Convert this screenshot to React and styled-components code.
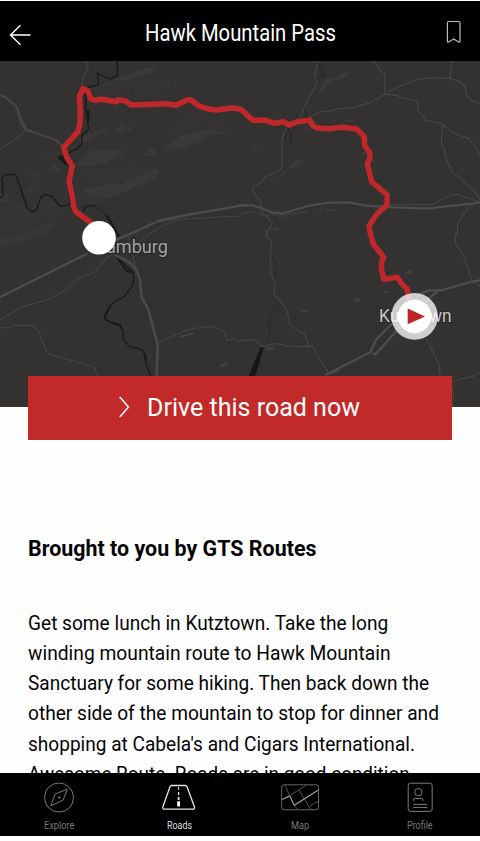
import React, { useLayoutEffect, useRef, useState } from "react";
import styled, { createGlobalStyle } from "styled-components";

const GlobalStyle = createGlobalStyle`
  * { box-sizing: border-box; }
  html, body { margin: 0; background: #fefefe; }
  body { font-family: Roboto, "Liberation Sans", sans-serif; overflow: hidden; }
`;

const Screen = styled.div`
  display: flex;
  flex-direction: column;
  width: 480px;
  height: 841px;
  padding: 1px 0 5px;
  overflow: hidden;
  background: #fefefe;
`;

const Header = styled.header`
  display: grid;
  grid-template-columns: 40px 1fr 40px;
  flex: 0 0 60px;
  align-items: center;
  color: #fff;
  background: #000;
  svg { display: block; }
`;

const IconButton = styled.button`
  display: flex;
  justify-content: ${(p) => (p.$end ? "flex-start" : "flex-end")};
  padding: ${(p) => (p.$end ? "2px 0 0 6px" : "7px 9px 0 0")};
  border: 0;
  color: inherit;
  background: none;
`;

const Title = styled.h1`
  display: flex;
  justify-content: center;
  margin: 6px 0 0;
  font-size: 23px;
  font-weight: 400;
  line-height: 28px;
`;

const FitBox = styled.span`
  display: block;
  flex: none;
  width: ${(p) => p.$width}px;
  white-space: nowrap;
`;

const FitInner = styled.span`
  display: inline-block;
  transform-origin: 0 50%;
`;

/* Condenses a line of text horizontally to the given width. */
function Fit({ width, children }) {
  const ref = useRef(null);
  const [scale, setScale] = useState(1);
  useLayoutEffect(() => {
    setScale(width / ref.current.offsetWidth);
  }, [width, children]);
  return (
    <FitBox $width={width}>
      <FitInner ref={ref} style={{ transform: `scaleX(${scale})` }}>{children}</FitInner>
    </FitBox>
  );
}

const MapView = styled.section`
  flex: 0 0 346px;
  background: #343231;
  svg { display: block; }
`;

const MapLabel = styled.text`
  font-size: 18.5px;
  fill: ${(p) => (p.$bright ? "#c9c9c9" : "#a3a3a3")};
  stroke: #252525;
  stroke-width: 2px;
  paint-order: stroke;
`;

const DriveButton = styled.button`
  display: flex;
  flex: 0 0 64px;
  align-items: center;
  gap: 15.5px;
  width: 424px;
  margin: -31.5px 28px 0;
  padding: 0 0 2px 90px;
  border: 0;
  color: #fff;
  background: #c22929;
  font: 400 26.5px/32px Roboto, "Liberation Sans", sans-serif;
`;

const Content = styled.main`
  flex: 1 1 0;
  min-height: 0;
  padding: 94.5px 28px 0;
  overflow: hidden;
  color: #050505;
`;

const Heading = styled.h2`
  margin: 0;
  font-size: 21.5px;
  font-weight: 700;
  line-height: 30px;
`;

const Description = styled.div`
  padding-top: 44px;
  font-size: 20px;
  line-height: 30.15px;
`;

const TabBar = styled.nav`
  display: grid;
  grid-template-columns: 118px 122px 120px 120px;
  flex: 0 0 63px;
  background: #000;
`;

const Tab = styled.a`
  display: flex;
  flex-direction: column;
  align-items: center;
  padding-top: 8px;
  color: ${(p) => (p.$active ? "#dedede" : "#777")};
  font-size: 10px;
  line-height: 12px;
  svg { display: block; margin-bottom: 7px; overflow: visible; }
`;

const lines = [
  ["Get some lunch in Kutztown. Take the long", 360],
  ["winding mountain route to Hawk Mountain", 362.5],
  ["Sanctuary for some hiking. Then back down the", 401],
  ["other side of the mountain to stop for dinner and", 411],
  ["shopping at Cabela's and Cigars International.", 387],
  ["Awesome Route. Roads are in good condition", 382],
];

const route =
  "M95 226 91.7 223.3 76 211.7 73.7 206.7 71.7 193.3 69 181.7 72.3 166 66.7 157.3 63.7 147.3 78 131.7 80 123.3 80.3 110 79.3 96.7 82.7 88.5 87.7 90.7 90.7 98.7 95 100.3 101.7 99.3 116.7 101.7 117.7 99.6 126 101.3 131 105 166.7 103.7 176 105.3 187.7 99.7 190.7 99.7 199 106 206.7 108.7 216.7 110 231.7 108 240 109 243 111 252.7 120.3 266 120.3 274.3 123.3 283.3 121.7 289.3 125 297.3 121.7 310 120.3 312.3 125 316 127.7 329.3 128.7 341.7 127.3 356.7 129 364.3 136.7 364.7 145.7 369.7 152.3 370 157.7 367.3 164.3 371.7 181.7 387.3 195 387 205 376.7 214.3 369 226 370.3 233 373.3 244 383.7 257.3 381.3 263.3 381.7 270.7 384 279.3 397.3 277.3 402.7 285 407.3 289 408.8 300";

function RouteMap() {
  return (
    <svg width="480" height="346" viewBox="0 61 480 346">
      <g transform="translate(0 60) scale(.33333)" fill="#3a3937">
        <path d="M270 85 330 63 347 92 296 97zM336 60 430 25 472 22 455 40 390 59 367 73zM345 207 365 195 376 205 362 218zM375 205 390 197 403 207 388 217zM240 234 315 205 320 212 284 231 280 240 240 245zM228 315 262 279 280 270 367 269 365 284 321 306 258 321zM420 289 455 267 474 270 471 286zM492 264 544 225 620 209 687 215 665 223 620 226 618 238 578 253 550 269 525 263 512 269zM146 332 164 311 181 332zM82 350 103 335 124 339 107 352zM228 412 260 388 312 373 366 371 415 339 465 325 488 333 450 365 398 384 347 408 292 418zM74 397 90 384 110 392zM25 478 50 445 70 448 65 487zM125 455 148 442 180 451 168 460zM0 405 25 398 20 430 0 430z" />
        <path d="M80 515 145 487 178 492 140 520 60 550 0 560 0 530z" opacity=".7" />
        <g fill="#363432">
          <path d="M290 82 390 57 400 67 328 108 287 112zM405 59 512 60 515 80 440 107 400 103zM540 150 600 157 618 178 592 186zM600 194 651 180 675 200 618 209zM100 291 207 251 206 278 160 302zM220 337 300 330 392 315 460 330 385 362 296 373zM180 400 240 390 321 423 243 434zM0 440 145 420 215 435 55 505 0 515zM495 215 592 170 590 196 531 215z" />
        </g>
      </g>
      <g transform="translate(240 60) scale(.33333)" fill="#3b3a38">
        <path d="M235 102 254 58 287 52 307 38 327 36 325 49 299 60 279 58zM313 180 323 177 348 184 322 186zM187 210 200 198 208 206zM30 270 43 262 63 269zM145 329 148 317 170 297 189 302 182 314zM103 360 134 331 138 345zM81 366 94 354 99 361zM229 449 246 442 249 452zM259 456 265 444 299 451zM89 514 106 500 119 503 112 512zM361 284 374 274 379 286zM102 476 202 455 128 475z" />
      </g>
      <g transform="translate(0 230) scale(.33333)" fill="#454442"><path d="M536 319 580 306 582 312 542 323zM659 407 679 396 684 401 665 412z" /></g>
      <g transform="translate(240 230) scale(.33333)" fill="#41403e"><path d="M490 131 508 119 517 120 515 130zM430 190 435 182 450 187zM338 207 348 203 363 207 359 215 347 214zM179 239 213 241 190 249zM75 359 82 351 103 353 99 362z" /></g>

      <g fill="none" stroke="#181a1a" strokeWidth="4" strokeLinejoin="round">
        <g transform="translate(0 60) scale(.33333)">
          <path d="M352 0V46L330 57 292 40 296 74 264 83M257 95V145L262 175 266 207 245 227 246 250 233 266 203 279" />
          <path d="M0 414 9 408 6 352 18 344 40 343 50 351 82 445 96 457 109 449 123 411 137 403 156 409 180 440 211 434 205 367M249 456 257 439 285 437" />
          <path d="M285 437 316 462 335 487 351 525" strokeWidth="2" />
          <path d="M263 150 266 183M320 465 357 530" strokeWidth="7" />
          <path d="M175 291 190 287 207 318 194 311z" fill="#181a1a" />
        </g>
        <g transform="translate(0 230) scale(.33333)">
          <path d="M350 78 400 130 401 145 397 169 370 202 350 211 332 226 313 258 314 266 332 277 357 285 369 300 370 328 388 349 427 360 437 376 436 396 452 438" />
          <path d="M350 80 380 123 400 127M332 226 313 261M335 277 360 285 365 296M433 370 438 393" strokeWidth="6" />
        </g>
        <path d="M264 347 260.5 347.5 247 380H254z" fill="#151716" stroke="none" />
      </g>

      <g fill="none" strokeLinecap="round" strokeLinejoin="round">
        <g transform="translate(0 60) scale(.33333)" stroke="#484746">
          <path d="M258 0 264 22 249 58 247 80M78 211 45 238 0 269" strokeWidth="3" />
          <path d="M0 104 22 116 50 142 61 172 81 210 165 239 188 258" strokeWidth="6" />
          <path d="M54 158 64 192 81 211" strokeWidth="6" />
          <path d="M720 437 545 468 474 483 387 524" stroke="#4d4c4c" strokeWidth="7" />
          <path d="M720 469 650 471 524 480 475 504 444 525" strokeWidth="2.5" />
        </g>
        <g transform="translate(240 60) scale(.33333)" stroke="#474644" strokeWidth="3.5">
          <path d="M232 0 230 26 224 41 229 64 221 92 204 115 181 174M140 205 130 222 126 244 126 323 118 333 80 348 67 366 39 381 37 391 63 428 66 463 79 468 98 489 78 525" />
          <path d="M395 0 416 20 419 29 434 40V103L472 106 483 113 524 120 534 132 533 147 556 181 602 190 646 222 686 235 720 282M434 103 393 127 345 142 290 147 282 151 240 156 202 175M434 103 480 78 533 59 580 53 632 56 661 65 674 79 680 109 693 121 720 131M635 0 630 54M607 196 604 252 614 270 617 292 636 337 665 357 688 382 708 400 720 418" />
          <path d="M0 436 38 436 65 445M580 432 626 408 650 403 720 426 688 438 666 471 653 491 652 525" />
          <path d="M0 464 29 454 66 464 130 465 202 454" strokeWidth="2.5" />
          <path d="M0 436 37 436 96 457 130 460 151 454 196 440 255 429 325 427 380 437 465 442 560 446 647 436 720 428" stroke="#4e4d4c" strokeWidth="6.5" />
          <path d="M440 434H580" strokeWidth="3" />
          <path d="M235 12 253 45 228 57M144 204 155 232 152 249 133 239 144 218" stroke="#222322" strokeWidth="3" />
          <path d="M192 142 202 174" stroke="#272827" strokeWidth="3" />
        </g>
        <g transform="translate(0 230) scale(.33333)" stroke="#484746">
          <path d="M0 270 65 232 142 209 196 182 228 149 286 125 321 82 345 70M467 0 407 45M386 20 405 105M0 294 28 292 47 286 97 287 115 300 139 365 151 375 233 396 284 413 294 438M476 338 555 303 584 295 636 289 672 303 681 333 704 324 709 335 720 333" strokeWidth="3" />
          <path d="M0 201 260 72M347 30 417 0" strokeWidth="7" stroke="#4e4d4c" />
          <path d="M348 77 387 96 407 116 420 149 425 202 444 236 473 344 470 438" strokeWidth="8" stroke="#4b4a49" />
        </g>
        <g transform="translate(240 230) scale(.33333)" stroke="#464543" strokeWidth="3.5">
          <path d="M78 0 77 15 95 36 91 95 94 107 91 125 105 157 102 192 124 216 142 245 151 286 193 313 206 346 219 351 242 394 265 426M0 332 42 328 68 349 107 340 150 349 218 350M653 0 646 16 647 43 668 70 695 151 720 169M561 330 595 398 601 438M636 456 663 447 697 440 720 428M636 477 641 500 638 531" />
          <path d="M94 72 110 102 102 156M112 221 88 265 89 309 78 342" stroke="#272827" strokeWidth="3" />
          <path d="M720 151 696 155 603 181 566 181 535 194M458 279 407 330 392 366 338 394 258 434M590 186 530 236 407 372 401 371" stroke="#4e4d4c" strokeWidth="7" />
          <path d="M275 430 293 424" strokeWidth="6" />
        </g>
      </g>

      <MapLabel x="93" y="252.7" textLength="75" lengthAdjust="spacingAndGlyphs">Hamburg</MapLabel>
      <MapLabel $bright x="379" y="322.3" textLength="72.5" lengthAdjust="spacingAndGlyphs">Kutztown</MapLabel>
      <path d={route} fill="none" stroke="#bf272a" strokeWidth="5.5" strokeLinejoin="round" />
      <circle cx="99" cy="237.8" r="16.8" fill="#fff" />
      <circle cx="414.6" cy="316.4" r="23.3" fill="#fff" fillOpacity=".76" />
      <circle cx="414.6" cy="316.4" r="16.8" fill="#fff" />
      <path d="M407.7 308.5 425 316.4 407.7 324.3z" fill="#bf2528" />
    </svg>
  );
}

const BackIcon = () => (
  <svg width="22" height="22" viewBox="0 0 22 22" fill="none" stroke="#fff" strokeWidth="1.4">
    <path d="M11.5 1.2 1.5 11 11.5 20.8M1.5 11H21.5" />
  </svg>
);
const BookmarkIcon = () => (
  <svg width="16" height="24" viewBox="0 0 16 24" fill="none" stroke="#bbb" strokeWidth="1.2" strokeLinejoin="round">
    <path d="M2.8 1.5H12.5Q14 1.5 14 3V21.3Q14 22.6 12.8 22L7.7 18.9 2.6 22Q1.4 22.6 1.4 21.3V3Q1.4 1.5 2.8 1.5Z" />
  </svg>
);
const Chevron = () => (
  <svg width="13" height="22" viewBox="0 0 13 22" fill="none" stroke="#fff" strokeWidth="1.5">
    <path d="M1.5 1.5H2.2L10.5 11 2.2 20.5H1.5" />
  </svg>
);
const ExploreIcon = () => (
  <svg width="32" height="32" viewBox="0 0 32 32" fill="none" stroke="#797979" strokeWidth="1">
    <circle cx="16" cy="16.5" r="14.5" />
    <path d="M24.3 8.1 20 19.3 7.8 24.8 12 13.2z" />
    <circle cx="16.2" cy="16.5" r="1" fill="#999" stroke="none" />
  </svg>
);
const RoadsIcon = () => (
  <svg width="36" height="32" viewBox="0 0 36 32" fill="none" stroke="#e4e4e4" strokeWidth="1.3">
    <path d="M10.7 4.5H24.2Q25.5 4.5 26 5.7L33.4 25.8Q34 28.1 31.8 28.1H3.6Q1.4 28.1 1.9 25.8L9 5.7Q9.5 4.5 10.7 4.5Z" />
    <path d="M17.6 6V9" strokeWidth="1" />
    <path d="M17.6 11V14.2" strokeWidth="1.3" />
    <path d="M17.6 16V19" strokeWidth="1.8" />
    <path d="M17.6 20.3V25.4" stroke="#fff" strokeWidth="2.8" />
  </svg>
);
const MapIcon = () => (
  <svg width="40" height="32" viewBox="0 0 40 32" fill="none" stroke="#676767" strokeWidth="1">
    <rect x="1.7" y="3.8" width="36.8" height="25" rx="2.4" />
    <path d="M5 4 9.5 14.7M14 24.6 18 28.5M10.5 14 26 4.5M19 9.2 30.3 28M29.5 25 38 20.4" stroke="#515151" />
    <path d="M2 18.5 9.8 14.8 14.2 24.4 38 9.3" stroke="#999" strokeWidth="1.3" />
  </svg>
);
const ProfileIcon = () => (
  <svg width="28" height="32" viewBox="0 0 28 32" fill="none" stroke="#7d7d7d" strokeWidth="1">
    <rect x="2.2" y="2.2" width="24" height="28.2" rx="2.5" />
    <circle cx="12.4" cy="11.2" r="3.7" />
    <path d="M7.4 20V19.2Q7.4 17.5 9.2 17.5H15.3Q17.1 17.5 17.1 19.2V20M7.3 23.4H21.3M7.3 26.4H21.3" />
  </svg>
);

const tabs = [
  ["Explore", 30.5, ExploreIcon],
  ["Roads", 25, RoadsIcon, true],
  ["Map", 18.5, MapIcon],
  ["Profile", 26, ProfileIcon],
];

export default function App() {
  return (
    <Screen>
      <GlobalStyle />
      <Header>
        <IconButton aria-label="Back"><BackIcon /></IconButton>
        <Title><Fit width={191}>Hawk Mountain Pass</Fit></Title>
        <IconButton $end aria-label="Save"><BookmarkIcon /></IconButton>
      </Header>
      <MapView><RouteMap /></MapView>
      <DriveButton><Chevron /><Fit width={213.5}>Drive this road now</Fit></DriveButton>
      <Content>
        <Heading><Fit width={288}>Brought to you by GTS Routes</Fit></Heading>
        <Description>
          {lines.map(([text, width]) => <Fit key={text} width={width}>{text}</Fit>)}
        </Description>
      </Content>
      <TabBar>
        {tabs.map(([name, width, Icon, active]) => (
          <Tab key={name} $active={active}><Icon /><Fit width={width}>{name}</Fit></Tab>
        ))}
      </TabBar>
    </Screen>
  );
}
